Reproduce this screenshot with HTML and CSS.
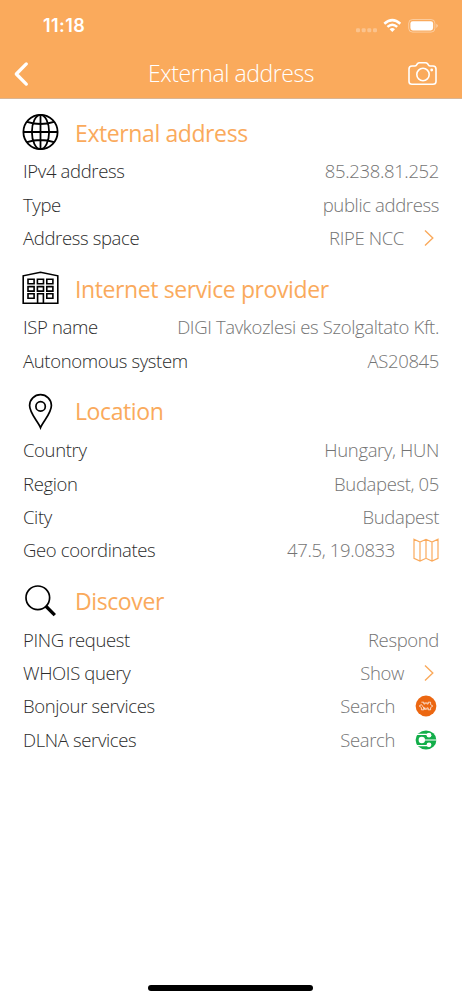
FILE: index.html
```html
<!DOCTYPE html>
<html lang="en">
<head>
<meta charset="utf-8">
<title>External address</title>
<link rel="stylesheet" href="styles.css">
</head>
<body>
<div class="screen">
  <header class="top">
    <div class="status">
      <span class="time">11:18</span>
      <svg class="signals" width="84" height="16" viewBox="0 0 84 16">
        <g fill="#fff" opacity=".3"><rect x="1" y="10.2" width="4" height="4" rx="1.2"/><rect x="6.7" y="10.2" width="4" height="4" rx="1.2"/><rect x="12.3" y="10.2" width="4" height="4" rx="1.2"/><rect x="18" y="10.2" width="4" height="4" rx="1.2"/></g>
        <g fill="none" stroke="#fff" stroke-width="2.5"><path d="M29.3 5.7Q37.3-1.5 45.3 5.7"/><path d="M32.4 8.9Q37.3 4.6 42.2 8.9"/></g>
        <path d="M34.6 11.2Q37.3 8.9 40 11.2L37.3 14Z" fill="#fff"/>
        <rect x="53.7" y="1.5" width="26.2" height="12.6" rx="3.8" fill="none" stroke="#fff" stroke-opacity=".4"/>
        <rect x="55.4" y="3.2" width="22.7" height="9.2" rx="2.3" fill="#fff"/>
        <path d="M81.3 5.7Q84.4 7.8 81.3 9.9Z" fill="#fff" opacity=".45"/>
      </svg>
    </div>
    <nav class="nav">
      <svg class="back" width="18" height="28" viewBox="0 0 18 28"><path d="M14.3 3.9L4.3 14 14.3 24.1" fill="none" stroke="#fff" stroke-width="3.3" stroke-linecap="round" stroke-linejoin="round"/></svg>
      <h1 class="title">External address</h1>
      <svg class="camera" width="30" height="26" viewBox="0 0 30 26" fill="none" stroke="#fff" stroke-width="1.6"><path d="M4 5H6.5Q8 5 8.7 3.8L9.4 2.8Q10.2 1.7 11.5 1.7H17.5Q18.8 1.7 19.6 2.8L20.3 3.8Q21 5 22.5 5H25Q28 5 28 8V20.5Q28 23.2 25 23.2H4Q1 23.2 1 20.5V8Q1 5 4 5Z"/><circle cx="15" cy="13.5" r="6.2"/><circle cx="23.7" cy="9" r="1.4" fill="#fff" stroke="none"/></svg>
    </nav>
  </header>
  <main class="content">
    <section>
      <div class="head">
        <svg class="icon" width="38" height="38" viewBox="0 0 38 38" fill="none" stroke="#000" stroke-width="1.8"><circle cx="18.5" cy="19" r="17.1"/><ellipse cx="18.5" cy="19" rx="8.6" ry="17.1"/><path d="M18.5 2V36M1.4 19H35.6M5 8.8Q18.5 13.2 32 8.8M5 29.2Q18.5 24.8 32 29.2"/></svg>
        <h2>External address</h2>
      </div>
      <div class="row"><span>IPv4 address</span><span class="value">85.238.81.252</span></div>
      <div class="row"><span>Type</span><span class="value">public address</span></div>
      <div class="row"><span>Address space</span><span class="value">RIPE NCC<svg class="chev" width="12" height="20" viewBox="0 0 12 20"><path d="M2 2.5L9.8 10 2 17.5"/></svg></span></div>
    </section>
    <section>
      <div class="head">
        <svg class="icon" width="38" height="38" viewBox="0 0 38 38" fill="none" stroke="#000" stroke-width="1.6"><path d="M1.2 34.3V6.8L18.5 3.3 35.8 6.8V34.3Z"/><path d="M6 10.2h6.1v4.5H6zM15.4 10.2h6.1v4.5h-6.1zM24.8 10.2h6.1v4.5h-6.1zM6 17.6h6.1v4.5H6zM15.4 17.6h6.1v4.5h-6.1zM24.8 17.6h6.1v4.5h-6.1zM6 24.8h6.1v4.5H6zM24.8 24.8h6.1v4.5h-6.1zM15.6 34.3V24.8h5.8v9.5"/></svg>
        <h2>Internet service provider</h2>
      </div>
      <div class="row"><span>ISP name</span><span class="value">DIGI Tavkozlesi es Szolgaltato Kft.</span></div>
      <div class="row"><span>Autonomous system</span><span class="value">AS20845</span></div>
    </section>
    <section>
      <div class="head">
        <svg class="icon" width="38" height="38" viewBox="0 0 38 38" fill="none" stroke="#000" stroke-width="1.7"><path d="M18.5 35.8C16 29.5 7.6 21.5 7.6 13.6A10.9 10.9 0 0 1 29.4 13.6C29.4 21.5 21 29.5 18.5 35.8Z"/><circle cx="18.6" cy="14.4" r="4.7"/></svg>
        <h2>Location</h2>
      </div>
      <div class="row"><span>Country</span><span class="value">Hungary, HUN</span></div>
      <div class="row"><span>Region</span><span class="value">Budapest, 05</span></div>
      <div class="row"><span>City</span><span class="value">Budapest</span></div>
      <div class="row"><span>Geo coordinates</span><span class="value">47.5, 19.0833<svg class="map" width="26" height="24" viewBox="0 0 26 24" fill="none" stroke="#faaa5c" stroke-width="1.2"><path d="M1 1.3L7 4 13 1.3 19 4 25 1.3V20.3L19 23 13 20.3 7 23 1 20.3ZM7 4V23M13 1.3V20.3M19 4V23"/></svg></span></div>
    </section>
    <section>
      <div class="head">
        <svg class="icon" width="38" height="38" viewBox="0 0 38 38" fill="none" stroke="#000" stroke-width="1.7"><circle cx="15.8" cy="15.8" r="11.8"/><path d="M23.7 24L32.8 33.2" stroke-width="3.3"/></svg>
        <h2>Discover</h2>
      </div>
      <div class="row"><span>PING request</span><span class="value">Respond</span></div>
      <div class="row"><span>WHOIS query</span><span class="value">Show<svg class="chev" width="12" height="20" viewBox="0 0 12 20"><path d="M2 2.5L9.8 10 2 17.5"/></svg></span></div>
      <div class="row"><span>Bonjour services</span><span class="value">Search<svg class="badge" width="22" height="22" viewBox="0 0 22 22"><circle cx="11" cy="11" r="10.4" fill="#ec6711"/><path d="M6.4 7.2H8.8V9H10.2V7.2M11.8 7.2V9H13.2V7.2H15.6V9.6L17.8 11 15.6 12.6V14.8H13.2V12.9H11.8V14.8M10.2 14.8V12.9H8.8V14.8H6.4V12.6L4.2 11 6.4 9.6Z" fill="none" stroke="#fff" stroke-opacity=".8" stroke-width=".9" stroke-linejoin="round"/></svg></span></div>
      <div class="row"><span>DLNA services</span><span class="value">Search<svg class="badge" width="22" height="22" viewBox="0 0 22 22"><ellipse cx="11" cy="11" rx="10.4" ry="9.4" fill="#12ae49"/><path d="M0 5.4H14M0 16.6H14M8 11H22" fill="none" stroke="#fff" stroke-width="1.2"/><g fill="#fff"><circle cx="14" cy="6.2" r="2.4"/><circle cx="14" cy="15.8" r="2.4"/><circle cx="6.8" cy="11" r="3.2"/></g></svg></span></div>
    </section>
  </main>
  <footer class="foot"><div class="home"></div></footer>
</div>
</body>
</html>
```
FILE: styles.css
```css
* { box-sizing: border-box; }
body { margin: 0; background: #fff; font-family: "Open Sans", "Noto Sans", sans-serif; font-weight: 300; }
.screen { width: 462px; height: 1000px; display: flex; flex-direction: column; overflow: hidden; }
.top { height: 99px; background: #faaa5c; border-bottom: 1px solid #d9b594; color: #fff; flex: none; }
.status { height: 48px; display: flex; justify-content: space-between; align-items: flex-start; padding: 13px 23px 0 43px; }
.time { font: 600 18px/25px Inter, sans-serif; letter-spacing: 0.4px; }
.signals { margin-top: 5px; }
.nav { height: 50px; display: grid; grid-template-columns: 30px 1fr 30px; align-items: center; padding: 0 24px 0 12px; }
.title { margin: 0; padding-left: 12px; text-align: center; font-size: 23px; letter-spacing: -0.43px; font-weight: 300; line-height: 32px; }
.back { margin-top: 2px; }
.camera { margin-top: 2px; }
.content { flex: 1; padding: 0 23px 0 22px; }
.head { height: 56px; padding-top: 10px; display: flex; align-items: center; }
.icon { margin-right: 15px; flex: none; }
h2 { margin: 1px 0 0; color: #faaa5c; font-size: 23px; letter-spacing: -0.4px; font-weight: 400; line-height: 32px; white-space: nowrap; }
.row { height: 33.4px; display: flex; align-items: center; justify-content: space-between; font-size: 18.5px; letter-spacing: -0.36px; line-height: 26px; color: #2c2c2c; white-space: nowrap; }
.row > span { margin-top: -1px; }
.row > span:first-child { padding-left: 1px; }
.value { color: #747474; display: flex; align-items: center; }
.chev { margin: 0 4px 0 19px; fill: none; stroke: #faaa5c; stroke-width: 1.4; }
.map { margin-left: 18px; }
.badge { margin: 0 2px 0 20px; }
.foot { height: 15px; display: flex; justify-content: center; align-items: flex-start; }
.home { width: 165px; height: 6px; margin-right: 1px; border-radius: 3px; background: #000; }
```
